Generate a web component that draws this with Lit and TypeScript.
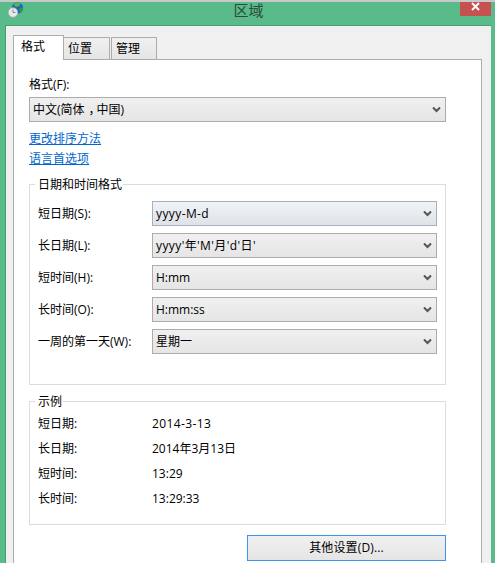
import { LitElement, html, css, svg } from "lit";
import { customElement } from "lit/decorators.js";

const chevron = svg`<svg class="chev" width="9" height="7" viewBox="0 0 9 7"><path d="M1 1.5 L4.5 5 L8 1.5" fill="none" stroke="#555" stroke-width="2"/></svg>`;

@customElement("app-root")
export class AppRoot extends LitElement {
  static styles = css`
    :host {
      display: block;
      width: 495px;
      height: 563px;
      overflow: hidden;
      background: #5abb8a;
      font-family: "Open Sans", "Noto Sans CJK SC", sans-serif;
      font-size: 12px;
      line-height: 16px;
      color: #000;
    }
    * { box-sizing: border-box; }
    .topline { height: 2px; background: #c9c9c9; }
    .titlebar {
      height: 23px;
      display: grid;
      grid-template-columns: 1fr auto 1fr;
      padding-left: 8px;
      padding-right: 6px;
    }
    .globe { display: block; }
    .title {
      font-size: 15px;
      line-height: 16px;
      color: #2c4a3a;
    }
    .close {
      justify-self: end;
      margin-right: -2px;
      width: 31px;
      height: 14px;
      background: #c75050;
      display: flex;
      align-items: flex-start;
      justify-content: center;
    }
    .inner {
      margin: 0 4px 0 5px;
      height: 538px;
      border-top: 1px solid #4a9d76;
      border-left: 1px solid #4a9d76;
      background: #f0f0f0;
      padding: 9px 9px 0 7px;
    }
    .tabs { display: flex; align-items: flex-end; height: 25px; position: relative; z-index: 1; margin-bottom: -1px; }
    .tab {
      height: 23px;
      width: 46px;
      margin-left: 1px;
      border: 1px solid #acacac;
      background: linear-gradient(#f0f0f0, #e5e5e5);
      padding: 3px 0 0 4px;
    }
    .tab.first { width: 51px; height: 25px; margin: 0; background: #fff; border-bottom: 0; padding: 3px 0 0 7px; }
    .tab.second { margin-left: 0; border-left: 0; }
    .panel {
      height: 520px;
      border: 1px solid #acacac;
      background: #fff;
      padding: 17px 35px 0 15px;
    }
    .field-label { height: 16px; margin-bottom: 4px; }
    .select {
      height: 25px;
      border: 1px solid #acacac;
      background: linear-gradient(#f0f0f0, #e5e5e5);
      display: flex;
      align-items: center;
      justify-content: space-between;
      padding: 0 4px 0 3px;
    }
    .select.hot {
      border-color: #a6b0bb;
      background: linear-gradient(#f0f3f6, #dfe3e8);
    }
    .chev { display: block; }
    .comma { font-feature-settings: "halt"; padding: 0 2px 0 4px; }
    .links { display: flex; flex-direction: column; gap: 4px; margin: 9px 0 8px; align-items: flex-start; }
    a { color: #0066cc; text-decoration: underline; }
    fieldset {
      margin: 0;
      padding: 8px 8px 30px;
      border: 1px solid #dcdcdc;
      min-width: 0;
    }
    legend { padding: 2px 1px 0 3px; margin-left: -3px; line-height: 16px; }
    .form { display: flex; flex-direction: column; gap: 7px; }
    .form-row { display: grid; grid-template-columns: 114px 285px; align-items: center; }
    .sample { margin-top: 7px; padding: 1px 8px 13px; }
    .sample-row { display: grid; grid-template-columns: 114px 1fr; height: 25px; align-items: center; }
    .spaced { letter-spacing: 0.4px; }
    .actions { display: flex; justify-content: flex-end; margin-top: 10px; }
    .button {
      width: 199px;
      height: 26px;
      border: 1px solid #3c94ee;
      background: linear-gradient(#f0f0f0, #e5e5e5);
      text-align: center;
      line-height: 24px;
      letter-spacing: 0.15px;
    }
  `;

  render() {
    const form = [
      ["短日期(S):", "yyyy-M-d", true, true],
      ["长日期(L):", "yyyy'年'M'月'd'日'", false, true],
      ["短时间(H):", "H:mm", false, false],
      ["长时间(O):", "H:mm:ss", false, false],
      ["一周的第一天(W):", "星期一", false, false],
    ] as const;
    const sample = [
      ["短日期:", "2014-3-13", true],
      ["长日期:", "2014年3月13日", false],
      ["短时间:", "13:29", false],
      ["长时间:", "13:29:33", false],
    ] as const;
    return html`
      <div class="topline"></div>
      <div class="titlebar">
        <svg class="globe" width="17" height="16" viewBox="0 0 17 16">
          <circle cx="9.5" cy="6" r="5.7" fill="#1a68bd"/>
          <path d="M6 2 Q9 -0.5 12.5 1.5 L11.5 4 L8.5 5 L6.5 4Z" fill="#58b84c"/>
          <path d="M11.5 6.5 L15 5 L14.5 9 L12 10.5Z" fill="#3c9a45"/>
          <circle cx="5" cy="10.5" r="4.8" fill="#e6e8ea" stroke="#a4a9ad" stroke-width="0.8"/>
          <path d="M5 7.5 V10.5 H7.5" fill="none" stroke="#6d7278" stroke-width="0.8"/>
        </svg>
        <div class="title">区域</div>
        <div class="close">
          <svg width="9" height="9" viewBox="0 0 9 9"><path d="M1 1 L8 8 M8 1 L1 8" stroke="#fff" stroke-width="2"/></svg>
        </div>
      </div>
      <div class="inner">
        <div class="tabs">
          <div class="tab first">格式</div>
          <div class="tab second">位置</div>
          <div class="tab">管理</div>
        </div>
        <div class="panel">
          <div class="field-label">格式(F):</div>
          <div class="select"><span>中文(简体<span class="comma">，</span>中国)</span>${chevron}</div>
          <div class="links">
            <a href="#">更改排序方法</a>
            <a href="#">语言首选项</a>
          </div>
          <fieldset>
            <legend>日期和时间格式</legend>
            <div class="form">
              ${form.map(
                ([l, v, hot, spaced]) => html`<div class="form-row">
                  <span>${l}</span>
                  <div class="select ${hot ? "hot" : ""}"><span class="${spaced ? "spaced" : ""}">${v}</span>${chevron}</div>
                </div>`
              )}
            </div>
          </fieldset>
          <fieldset class="sample">
            <legend>示例</legend>
            ${sample.map(
              ([l, v, spaced]) => html`<div class="sample-row"><span>${l}</span><span class="${spaced ? "spaced" : ""}">${v}</span></div>`
            )}
          </fieldset>
          <div class="actions"><div class="button">其他设置(D)...</div></div>
        </div>
      </div>
    `;
  }
}
